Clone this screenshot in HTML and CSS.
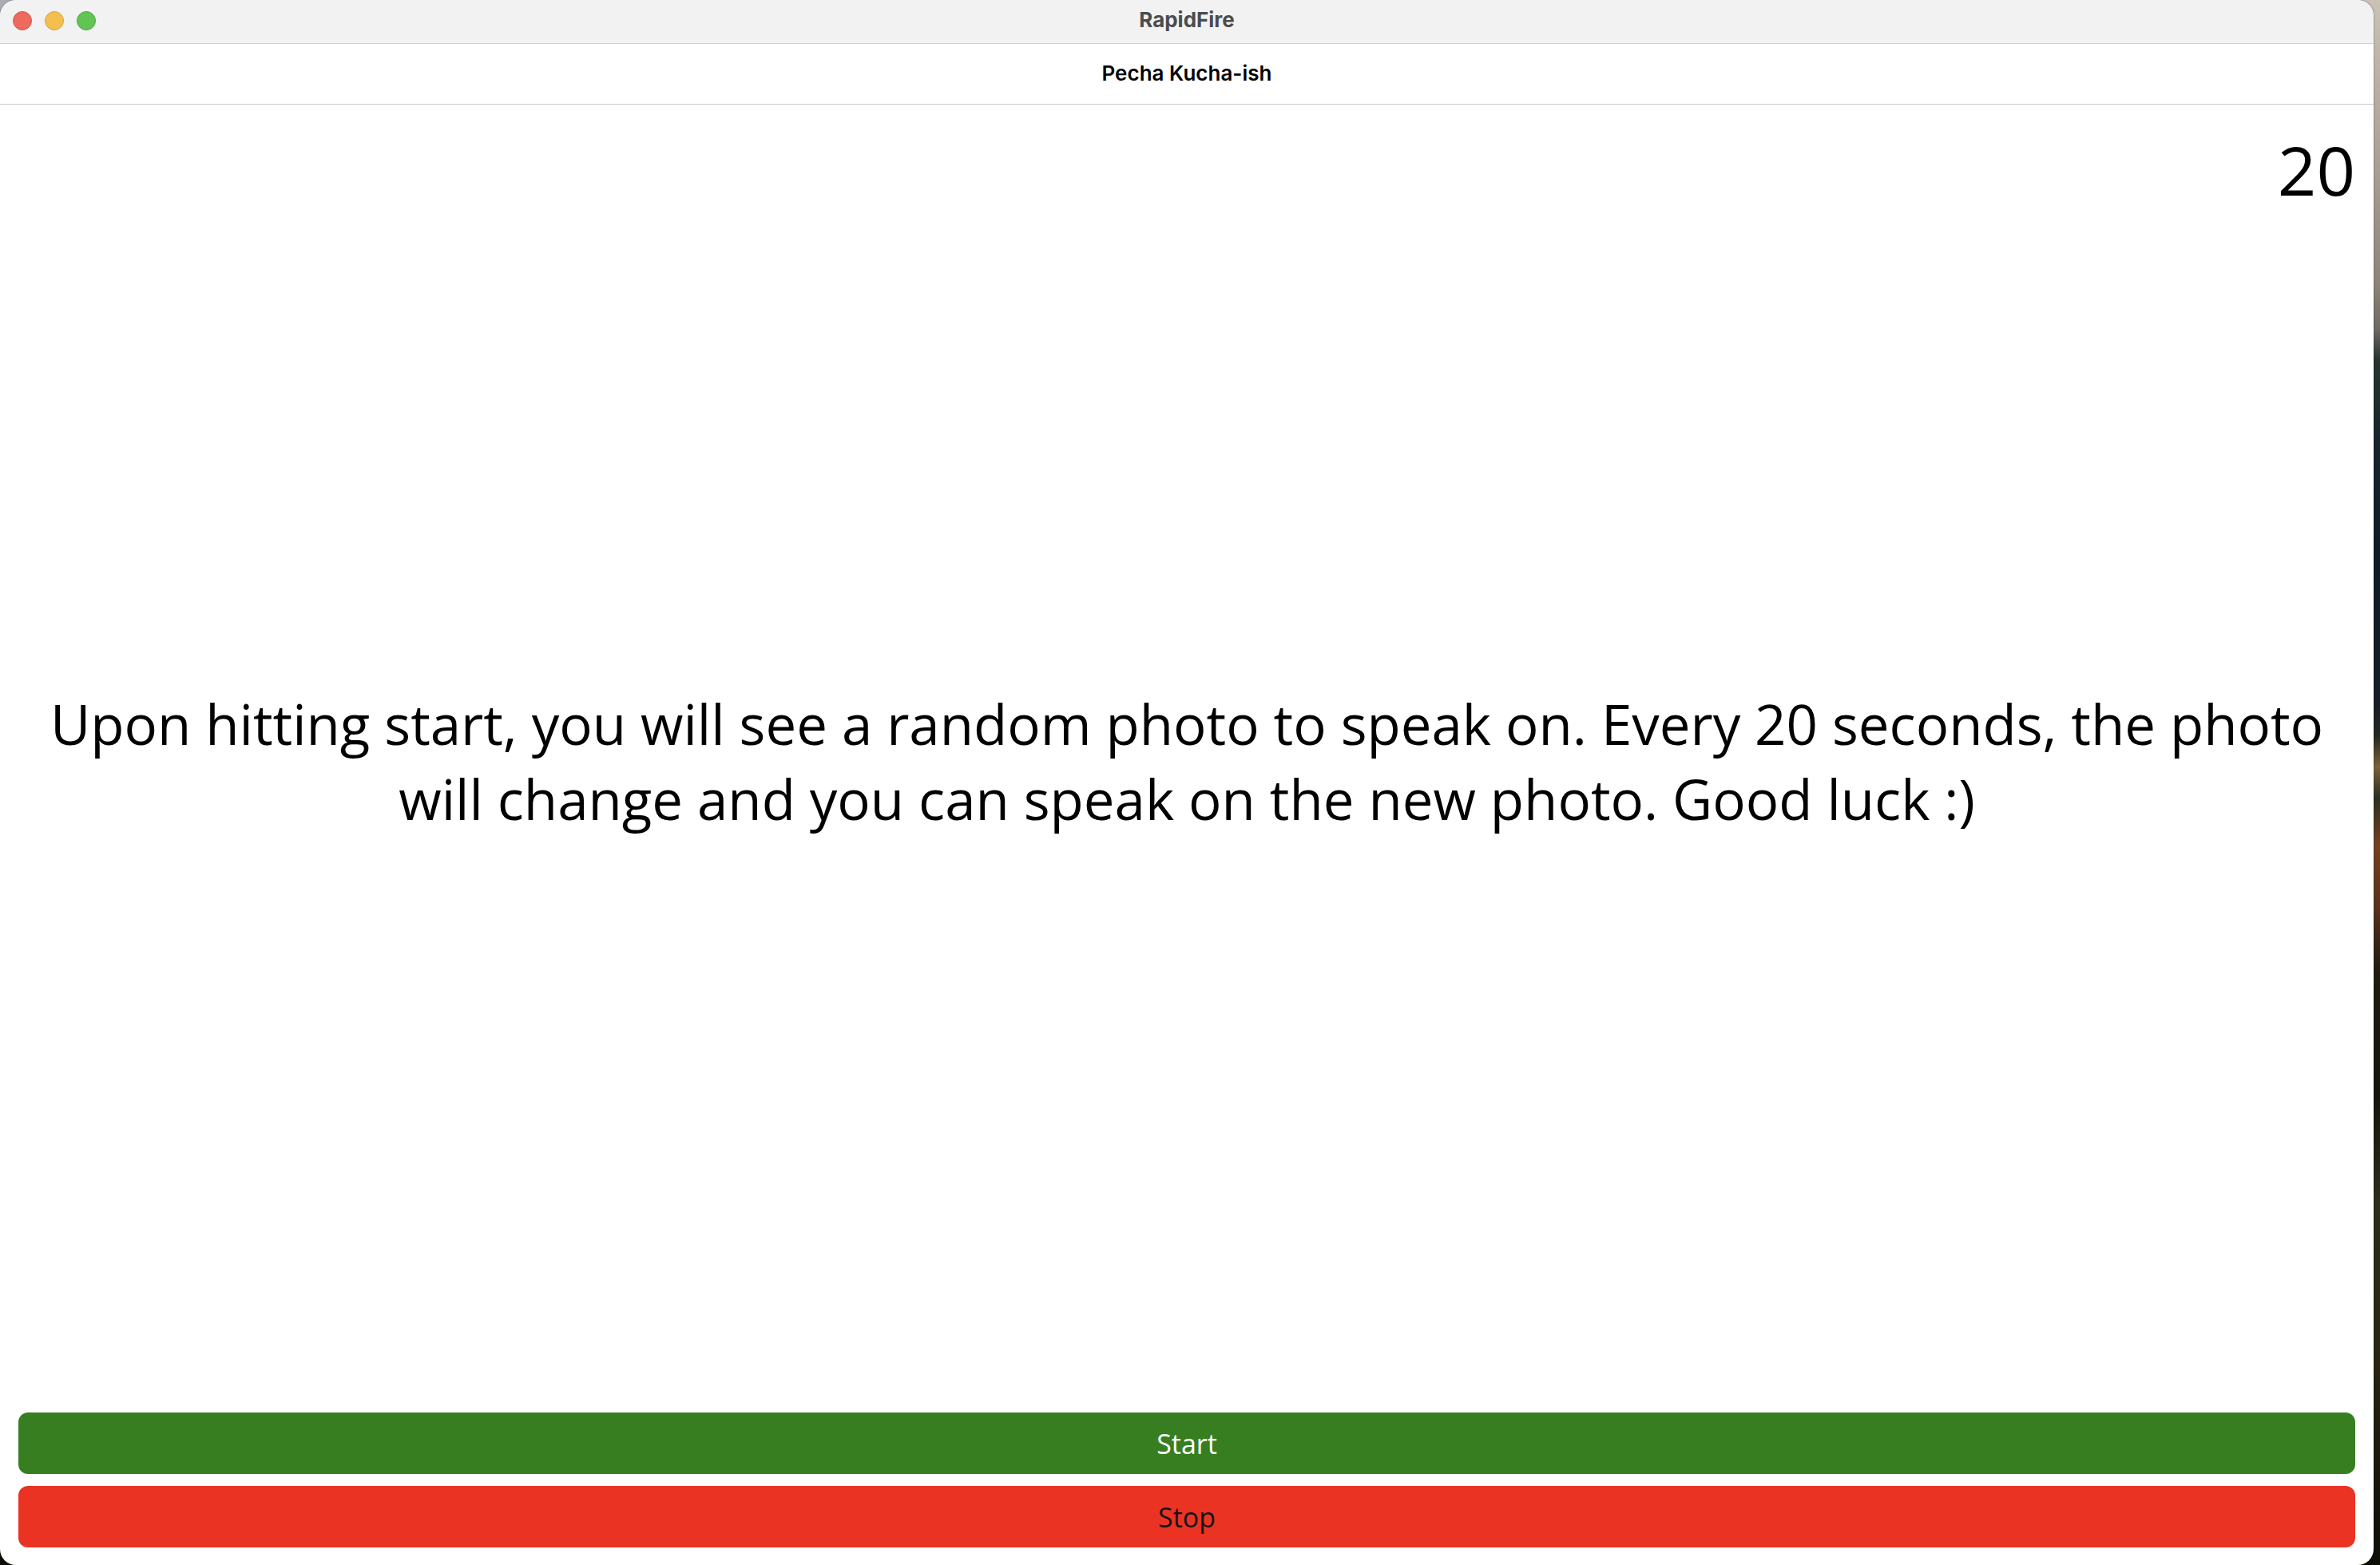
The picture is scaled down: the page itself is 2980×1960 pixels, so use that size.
FILE: index.html
```html
<!DOCTYPE html>
<html lang="en">
<head>
<meta charset="utf-8">
<title>RapidFire</title>
<link rel="stylesheet" href="styles.css">
</head>
<body class="desktop">
<div class="window">
  <header class="titlebar">
    <div class="lights">
      <button class="light light-close" type="button" aria-label="Close"></button>
      <button class="light light-minimize" type="button" aria-label="Minimize"></button>
      <button class="light light-zoom" type="button" aria-label="Zoom"></button>
    </div>
    <span class="window-title">RapidFire</span>
  </header>
  <div class="navbar"><h1 class="page-title">Pecha Kucha-ish</h1></div>
  <main class="page">
    <div class="timer">20</div>
    <div class="stage">
      <p class="intro">Upon hitting start, you will see a random photo to speak on. Every 20 seconds, the photo will change and you can speak on the new photo. Good luck :)</p>
    </div>
    <div class="actions">
      <button class="action action-start" type="button">Start</button>
      <button class="action action-stop" type="button">Stop</button>
    </div>
  </main>
</div>
</body>
</html>
```
FILE: styles.css
```css
* {
  box-sizing: border-box;
}

.desktop {
  margin: 0;
  min-height: 100vh;
  display: flex;
  padding-right: 8px;
  font-family: "Open Sans", "Noto Sans", sans-serif;
  color: #000;
  /* wallpaper: pale sky, dark ridge, autumn field */
  background:
    linear-gradient(90deg, #a9adb4 0 60px, transparent 60px) 0 0 / 100% 60px no-repeat,
    linear-gradient(180deg, #c9c2b5 0%, #aaa294 10%, #8d857b 18%, #6f6963 21%,
      #27332f 23%, #18242b 28%, #101a27 36%, #161d27 45%, #232921 47%,
      #7d6034 49%, #2b3020 51%, #74401f 54%, #593219 58%, #201a10 62%,
      #15140c 70%, #2c2e18 77%, #2a260f 86%, #1f1a0c 92%, #0d0e04 100%);
}

.window {
  flex: 1;
  display: flex;
  flex-direction: column;
  border-radius: 20px;
  overflow: hidden;
  background: #fff;
  box-shadow: 0 0 2px rgba(0, 0, 0, 0.6);
}

.titlebar {
  display: grid;
  grid-template-columns: 1fr auto 1fr;
  align-items: center;
  height: 55px;
  padding: 0 16px 2px;
  background: #f2f2f2;
  border-bottom: 1px solid #d1d1d1;
  font-family: Inter, sans-serif;
}

.lights {
  display: flex;
  gap: 16px;
}

.light {
  width: 24px;
  height: 24px;
  padding: 0;
  border: 1px solid;
  border-radius: 50%;
}

.light-close {
  background: #ec6a5e;
  border-color: #d3574b;
}

.light-minimize {
  background: #f4bf4f;
  border-color: #d8a140;
}

.light-zoom {
  background: #61c554;
  border-color: #4fa73f;
}

.window-title {
  padding-bottom: 2px;
  font-size: 26px;
  line-height: 32px;
  font-weight: 700;
  color: #4c4c4c;
}

.navbar {
  display: flex;
  align-items: center;
  justify-content: center;
  height: 76px;
  padding-bottom: 2px;
  border-bottom: 1px solid #c9c9c9;
}

.page-title {
  margin: 0;
  font-family: Inter, sans-serif;
  font-size: 26px;
  line-height: 32px;
  font-weight: 600;
}

.page {
  flex: 1;
  display: flex;
  flex-direction: column;
  padding: 23px 23px 22px;
}

.timer {
  text-align: right;
  font-size: 85px;
  line-height: 116px;
}

.stage {
  flex: 1;
  display: flex;
  align-items: center;
  justify-content: center;
}

.intro {
  margin: 0;
  padding: 0 30px 134px;
  text-align: center;
  font-size: 69px;
  line-height: 94px;
}

.actions {
  display: flex;
  flex-direction: column;
  gap: 15px;
}

.action {
  height: 77px;
  padding: 0;
  border: 0;
  border-radius: 12px;
  font-family: inherit;
  font-size: 34px;
  line-height: 48px;
}

.action-start {
  background: #377e21;
  color: #fff;
}

.action-stop {
  background: #ea3323;
  color: #141414;
}
```
